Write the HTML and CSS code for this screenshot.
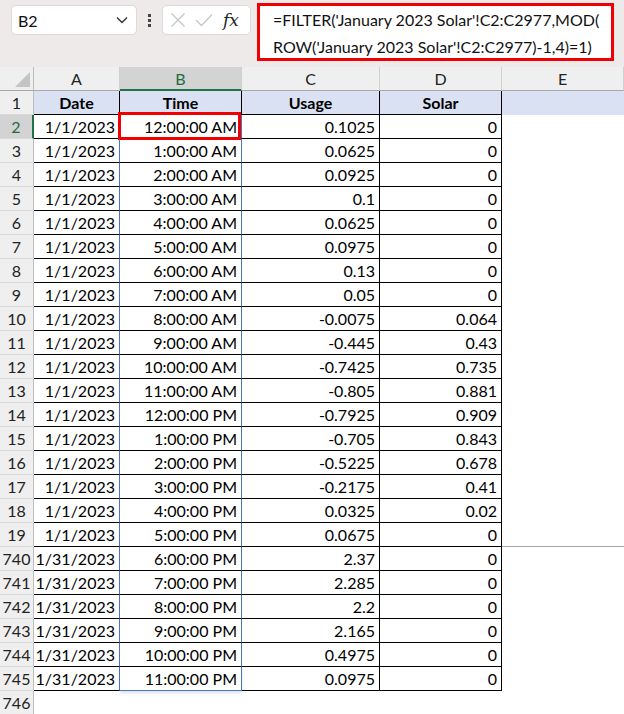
FILE: index.html
```html
<!DOCTYPE html>
<html>
<head>
<meta charset="utf-8">
<link rel="stylesheet" href="styles.css">
</head>
<body>
<div class="toolbar">
  <div class="namebox"><span class="nb-text">B2</span>
    <svg class="chev" width="12" height="8" viewBox="0 0 12 8"><path d="M1 1.5 L6 6.5 L11 1.5" fill="none" stroke="#333" stroke-width="1.4"/></svg>
  </div>
  <div class="dots"><i></i><i></i><i></i></div>
  <div class="fxbox">
    <svg width="16" height="16" viewBox="0 0 16 16"><path d="M1.5 1.5 L14.5 14.5 M14.5 1.5 L1.5 14.5" stroke="#c6c6c6" stroke-width="1.3" fill="none"/></svg>
    <svg width="18" height="14" viewBox="0 0 18 14"><path d="M1 7 L6.5 12.5 L17 1.5" stroke="#c6c6c6" stroke-width="1.3" fill="none"/></svg>
    <span class="fx">fx</span>
  </div>
  <div class="formula">=FILTER('January 2023 Solar'!C2:C2977,MOD(<br>ROW('January 2023 Solar'!C2:C2977)-1,4)=1)</div>
</div>
<div class="sheet">
  <div class="ch corner"><div class="tri"></div></div>
  <div class="ch">A</div><div class="ch sel">B</div><div class="ch">C</div><div class="ch">D</div><div class="ch">E</div>

  <div class="rh">1</div><div class="c h">Date</div><div class="c h">Time</div><div class="c h">Usage</div><div class="c h">Solar</div><div class="e hf"></div>

  <div class="rh selr">2</div><div class="c a">1/1/2023</div><div class="c b"><div class="redbox"></div>12:00:00 AM</div><div class="c">0.1025</div><div class="c">0</div><div class="e"></div>
  <div class="rh">3</div><div class="c a">1/1/2023</div><div class="c b">1:00:00 AM</div><div class="c">0.0625</div><div class="c">0</div><div class="e"></div>
  <div class="rh">4</div><div class="c a">1/1/2023</div><div class="c b">2:00:00 AM</div><div class="c">0.0925</div><div class="c">0</div><div class="e"></div>
  <div class="rh">5</div><div class="c a">1/1/2023</div><div class="c b">3:00:00 AM</div><div class="c">0.1</div><div class="c">0</div><div class="e"></div>
  <div class="rh">6</div><div class="c a">1/1/2023</div><div class="c b">4:00:00 AM</div><div class="c">0.0625</div><div class="c">0</div><div class="e"></div>
  <div class="rh">7</div><div class="c a">1/1/2023</div><div class="c b">5:00:00 AM</div><div class="c">0.0975</div><div class="c">0</div><div class="e"></div>
  <div class="rh">8</div><div class="c a">1/1/2023</div><div class="c b">6:00:00 AM</div><div class="c">0.13</div><div class="c">0</div><div class="e"></div>
  <div class="rh">9</div><div class="c a">1/1/2023</div><div class="c b">7:00:00 AM</div><div class="c">0.05</div><div class="c">0</div><div class="e"></div>
  <div class="rh">10</div><div class="c a">1/1/2023</div><div class="c b">8:00:00 AM</div><div class="c">-0.0075</div><div class="c">0.064</div><div class="e"></div>
  <div class="rh">11</div><div class="c a">1/1/2023</div><div class="c b">9:00:00 AM</div><div class="c">-0.445</div><div class="c">0.43</div><div class="e"></div>
  <div class="rh">12</div><div class="c a">1/1/2023</div><div class="c b">10:00:00 AM</div><div class="c">-0.7425</div><div class="c">0.735</div><div class="e"></div>
  <div class="rh">13</div><div class="c a">1/1/2023</div><div class="c b">11:00:00 AM</div><div class="c">-0.805</div><div class="c">0.881</div><div class="e"></div>
  <div class="rh">14</div><div class="c a">1/1/2023</div><div class="c b">12:00:00 PM</div><div class="c">-0.7925</div><div class="c">0.909</div><div class="e"></div>
  <div class="rh">15</div><div class="c a">1/1/2023</div><div class="c b">1:00:00 PM</div><div class="c">-0.705</div><div class="c">0.843</div><div class="e"></div>
  <div class="rh">16</div><div class="c a">1/1/2023</div><div class="c b">2:00:00 PM</div><div class="c">-0.5225</div><div class="c">0.678</div><div class="e"></div>
  <div class="rh">17</div><div class="c a">1/1/2023</div><div class="c b">3:00:00 PM</div><div class="c">-0.2175</div><div class="c">0.41</div><div class="e"></div>
  <div class="rh">18</div><div class="c a">1/1/2023</div><div class="c b">4:00:00 PM</div><div class="c">0.0325</div><div class="c">0.02</div><div class="e"></div>
  <div class="rh">19</div><div class="c a">1/1/2023</div><div class="c b">5:00:00 PM</div><div class="c">0.0675</div><div class="c">0</div><div class="e hid"></div>
  <div class="rh">740</div><div class="c a">1/31/2023</div><div class="c b">6:00:00 PM</div><div class="c">2.37</div><div class="c">0</div><div class="e"></div>
  <div class="rh">741</div><div class="c a">1/31/2023</div><div class="c b">7:00:00 PM</div><div class="c">2.285</div><div class="c">0</div><div class="e"></div>
  <div class="rh">742</div><div class="c a">1/31/2023</div><div class="c b">8:00:00 PM</div><div class="c">2.2</div><div class="c">0</div><div class="e"></div>
  <div class="rh">743</div><div class="c a">1/31/2023</div><div class="c b">9:00:00 PM</div><div class="c">2.165</div><div class="c">0</div><div class="e"></div>
  <div class="rh">744</div><div class="c a">1/31/2023</div><div class="c b">10:00:00 PM</div><div class="c">0.4975</div><div class="c">0</div><div class="e"></div>
  <div class="rh">745</div><div class="c a">1/31/2023</div><div class="c b last">11:00:00 PM</div><div class="c">0.0975</div><div class="c">0</div><div class="e"></div>
  <div class="rh">746</div><div class="e"></div><div class="e"></div><div class="e"></div><div class="e"></div><div class="e"></div>
</div>
</body>
</html>
```
FILE: styles.css
```css
html, body {
  margin: 0;
  padding: 0;
  background: #ffffff;
  overflow: hidden;
}
body {
  width: 624px;
  height: 714px;
  font-family: Lato, "Liberation Sans", sans-serif;
  color: #000;
}
.toolbar {
  height: 67px;
  background: #eeeaea;
  display: flex;
  align-items: flex-start;
  box-sizing: border-box;
}
.namebox {
  margin: 5px 0 0 11px;
  width: 126px;
  height: 30px;
  box-sizing: border-box;
  background: #fff;
  border: 1px solid #dedada;
  border-radius: 5px;
  display: flex;
  align-items: center;
  justify-content: space-between;
  padding: 0 8px 0 6px;
}
.nb-text {
  font-size: 16px;
  color: #111;
}
.dots {
  margin: 14px 0 0 11px;
  display: flex;
  flex-direction: column;
  gap: 2px;
  width: 3px;
}
.dots i {
  display: block;
  width: 3px;
  height: 3px;
  background: #444;
}
.fxbox {
  margin: 5px 0 0 11px;
  width: 89px;
  height: 30px;
  box-sizing: border-box;
  background: #fff;
  border: 1px solid #dedada;
  border-radius: 5px;
  display: flex;
  align-items: center;
  padding: 0 4px 0 7px;
  gap: 9px;
}
.fx {
  font-family: "DejaVu Serif", "Liberation Serif", serif;
  font-style: italic;
  font-size: 17px;
  color: #222;
  margin-left: 1px;
}
.formula {
  margin: 3px 0 0 6px;
  width: 357px;
  height: 58px;
  box-sizing: border-box;
  border: 3px solid #f00000;
  background: #fff;
  font-size: 16px;
  line-height: 27px;
  padding: 0 0 0 13px;
  color: #111;
  white-space: nowrap;
}
.sheet {
  display: grid;
  grid-template-columns: 34px 86px 122px 138px 122px 1fr;
  grid-auto-rows: 24px;
}
.sheet > div {
  box-sizing: border-box;
  font-size: 16px;
  line-height: 23px;
  white-space: nowrap;
}
.ch {
  background: #efefef;
  border-right: 1px solid #cfcfcf;
  border-bottom: 1px solid #a9a9a9;
  text-align: center;
  color: #222;
}
.ch.sel {
  background: #d3d3d3;
  color: #1e6b3f;
  border-bottom: 2px solid #217346;
}
.corner {
  border-right: 1px solid #bdbdbd;
  display: flex;
  align-items: flex-end;
  justify-content: flex-end;
  padding: 0 3px 3px 0;
}
.tri {
  width: 15px;
  height: 15px;
  background: #c4c4c4;
  clip-path: polygon(100% 0, 100% 100%, 0 100%);
}
.rh {
  background: #efefef;
  border-right: 1px solid #bdbdbd;
  border-bottom: 1px solid #d9d9d9;
  text-align: center;
  color: #222;
}
.rh.selr {
  background: #d3d3d3;
  border-right: 2px solid #217346;
  color: #1e6b3f;
}
.c {
  border-right: 1px solid #000;
  border-bottom: 1px solid #000;
  text-align: right;
  padding-right: 4px;
  position: relative;
}
.c.h {
  background: #d9e1f2;
  font-weight: bold;
  text-align: center;
  padding-right: 0;
}
.c.a {
  border-right-color: #4a74c4;
}
.c.b {
  border-right-color: #4a74c4;
}
.c.b.last {
  border-bottom-color: #4a74c4;
  box-shadow: 0 2px 3px rgba(60, 90, 160, 0.18);
}
.e.hf {
  background: #d9e1f2;
}
.e.hid {
  border-bottom: 1px solid #a6a6a6;
}
.redbox {
  position: absolute;
  left: -2px;
  top: -3px;
  width: 123px;
  height: 28px;
  box-sizing: border-box;
  border: 3px solid #f00000;
  pointer-events: none;
}
```
